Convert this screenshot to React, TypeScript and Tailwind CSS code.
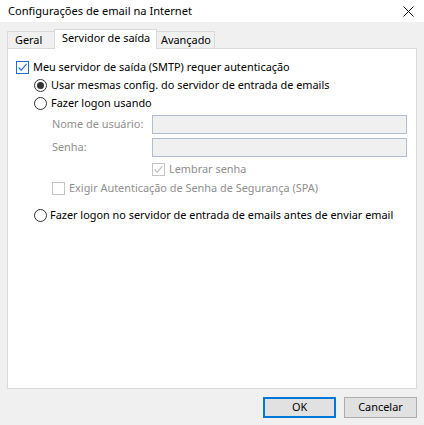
import React from "react";

const font = { fontFamily: '"Noto Sans", "Segoe UI", sans-serif' };

const Check = ({ checked, disabled }: { checked?: boolean; disabled?: boolean }) => (
  <span
    className={
      "w-[13px] h-[13px] shrink-0 border flex items-center justify-center bg-white " +
      (disabled ? "border-[#c4c4c4]" : "border-[#1a6fc9]")
    }
  >
    {checked && (
      <svg width="11" height="11" viewBox="0 0 11 11">
        <path
          d="M1.5 5.5 L4.2 8.2 L9.5 2.2"
          fill="none"
          stroke={disabled ? "#bdbdbd" : "#1a6fc9"}
          strokeWidth="1.1"
        />
      </svg>
    )}
  </span>
);

const Radio = ({ selected }: { selected?: boolean }) => (
  <span className="w-[13px] h-[13px] shrink-0 rounded-full border border-[#333333] flex items-center justify-center bg-white">
    {selected && <span className="w-[7px] h-[7px] rounded-full bg-[#333333]" />}
  </span>
);

export default function App() {
  return (
    <div
      className="w-[424px] h-[425px] bg-[#f0f0f0] flex flex-col text-[10.9px] text-black overflow-hidden whitespace-nowrap"
      style={font}
    >
      {/* title bar */}
      <div className="h-[22px] bg-white flex items-center justify-between pl-[8px] pr-[10px]">
        <span className="text-[11.1px] text-[#000]">Configurações de email na Internet</span>
        <svg width="11" height="11" viewBox="0 0 11 11">
          <path d="M0.5 0.5 L10.5 10.5 M10.5 0.5 L0.5 10.5" stroke="#111" strokeWidth="1" />
        </svg>
      </div>

      {/* tabs */}
      <div className="flex items-end pl-[7px] pt-[7px] relative z-10 -mb-px">
        <div className="w-[47px] h-[18px] pl-[7px] border border-[#d9d9d9] border-r-0 border-b-0 flex items-center">
          Geral
        </div>
        <div className="w-[103px] h-[20px] pl-[7px] border border-[#d9d9d9] border-b-0 bg-white flex items-center pb-[2px]">
          Servidor de saída
        </div>
        <div className="w-[58px] h-[18px] pl-[4px] border border-[#d9d9d9] border-l-0 border-b-0 flex items-center">
          Avançado
        </div>
      </div>

      {/* panel */}
      <div className="mx-[7px] h-[341px] border border-[#d9d9d9] bg-white flex flex-col pl-[8px]">
        <div className="mt-[9px] h-[18px] flex items-center gap-[4px]">
          <Check checked />
          <span>Meu servidor de saída (SMTP) requer autenticação</span>
        </div>
        <div className="pl-[18px] flex flex-col">
          <div className="h-[18px] flex items-center gap-[4px]">
            <Radio selected />
            <span>Usar mesmas config. do servidor de entrada de emails</span>
          </div>
          <div className="h-[19px] flex items-center gap-[4px]">
            <Radio />
            <span>Fazer logon usando</span>
          </div>
          <div className="pl-[18px] flex flex-col text-[#8f8f8f]">
            <div className="mt-[2px] h-[19px] flex items-center">
              <span className="w-[100px] shrink-0">Nome de usuário:</span>
              <div className="w-[255px] h-[19px] shrink-0 border border-[#aebfd3] bg-[#f0f0f0]" />
            </div>
            <div className="mt-[4px] h-[19px] flex items-center">
              <span className="w-[100px] shrink-0">Senha:</span>
              <div className="w-[255px] h-[19px] shrink-0 border border-[#aebfd3] bg-[#f0f0f0]" />
            </div>
            <div className="mt-[3px] h-[18px] flex items-center gap-[4px] pl-[100px]">
              <Check checked disabled />
              <span>Lembrar senha</span>
            </div>
            <div className="mt-[1px] h-[19px] flex items-center gap-[4px]">
              <Check disabled />
              <span>Exigir Autenticação de Senha de Segurança (SPA)</span>
            </div>
          </div>
          <div className="mt-[8px] h-[19px] flex items-center gap-[3px]">
            <Radio />
            <span>Fazer logon no servidor de entrada de emails antes de enviar email</span>
          </div>
        </div>
      </div>

      {/* buttons */}
      <div className="flex justify-end gap-[8px] pr-[7px] mt-[8px]">
        <button className="w-[73px] h-[21px] border-2 border-[#0078d7] bg-[#e1e1e1] flex items-center justify-center">
          OK
        </button>
        <button className="w-[73px] h-[21px] border border-[#adadad] bg-[#e1e1e1] flex items-center justify-center">
          Cancelar
        </button>
      </div>
    </div>
  );
}
